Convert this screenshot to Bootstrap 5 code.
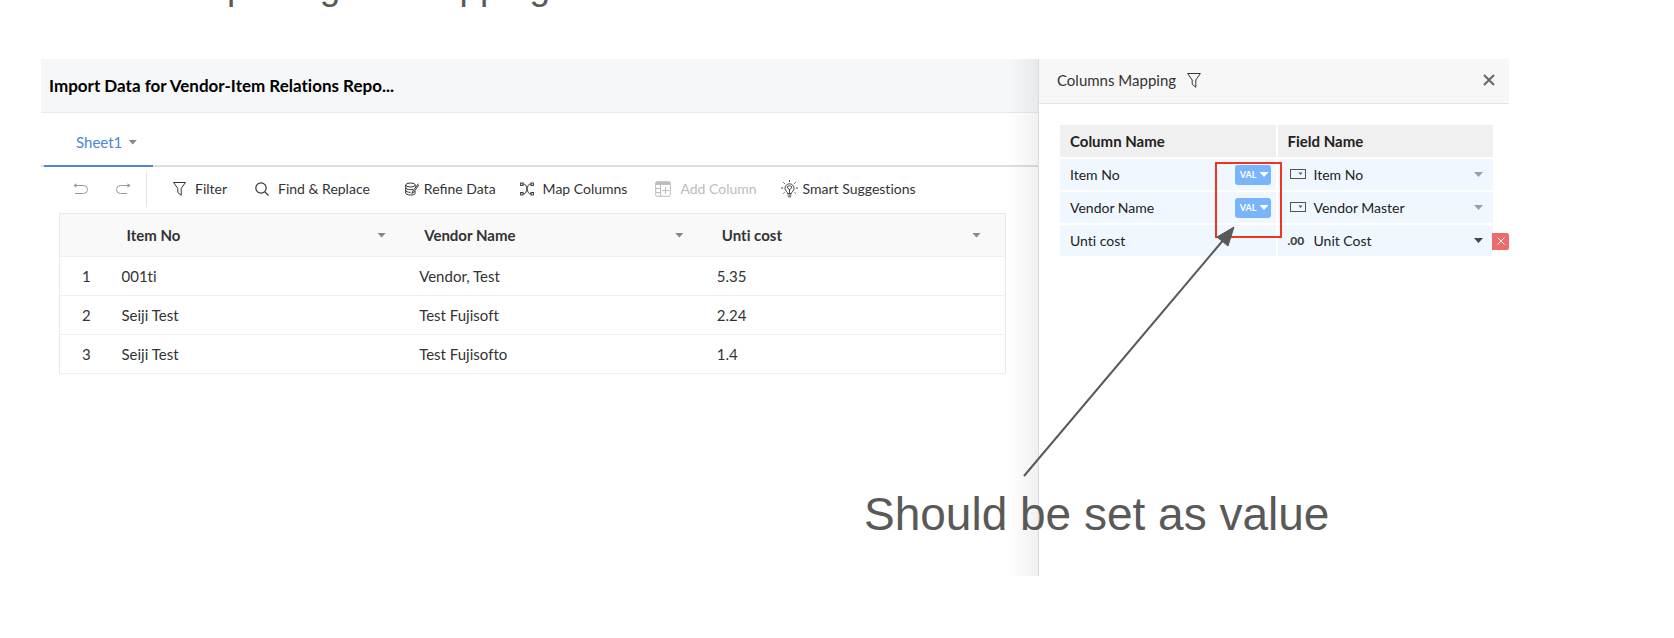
<!DOCTYPE html>
<html lang="en">
<head>
<meta charset="utf-8">
<meta name="viewport" content="width=device-width, initial-scale=1">
<title>Import Data for Vendor-Item Relations Report</title>
<link href="https://cdn.jsdelivr.net/npm/bootstrap@5.3.0/dist/css/bootstrap.min.css" rel="stylesheet">
<style>
  body { font-family: Lato, sans-serif; font-size: 14px; line-height: 20px; color: #333; background: #fff; font-variant-ligatures: none; }
  svg { display: block; flex: none; fill: none; stroke: currentColor; }
  button { font: inherit; font-variant-ligatures: none; }
  .bare { background: none; border: 0; padding: 0; color: inherit; }
  .caret { width: 9px; height: 5px; flex: none; background: #888; clip-path: polygon(0 0, 100% 0, 50% 100%); }

  .slide-title { height: 8px; padding-left: 186px; }
  .slide-title h1 { margin: 0; font: 37px/42px "Liberation Sans", sans-serif; color: #595959; white-space: nowrap; }

  .stage { margin: 51px 165px 62px 41px; min-height: 517px; }
  .workspace { min-width: 0; }
  .page-head { height: 54px; padding: 2px 0 0 8px; background: #f6f7f9; border-bottom: 1px solid #e8eaec; }
  .page-head h2 { margin: 0; font-size: 17px; font-weight: 700; color: #000; }
  .sheet-tabs { height: 54px; padding-left: 3px; border-bottom: 2px solid #dedede; }
  .sheet-tab { width: 109px; height: 54px; padding: 6px 0 0 32px; gap: 6px; color: #4a87d6; font-size: 15px; border-bottom: 2px solid #4a87d6; }
  .toolbar { height: 46px; padding: 0 0 2px 32px; }
  .history { height: 35px; padding-right: 15px; gap: 28px; color: #999; border-right: 1px solid #e4e4e4; }
  .tools { padding-left: 26px; gap: 24px; }
  .tool { gap: 9px; white-space: nowrap; }
  .tool-tight { gap: 5px; }
  .tool-group { margin-left: 11px; }
  .tool:disabled { color: #bcbcbc; }
  .with-liga { font-variant-ligatures: normal; }

  .sheet-wrap { padding: 0 32px 0 18px; }
  .sheet-grid { width: 100%; table-layout: fixed; border: 1px solid #e9e9e9; font-size: 15px; }
  .sheet-grid tr { border-bottom: 1px solid #efefef; }
  .sheet-grid th { height: 43px; padding: 0 24px 0 14px; background: #f9f9f9; font-weight: 700; }
  .sheet-grid td { height: 39px; padding: 0 9px; }
  .sheet-grid .num { width: 53px; padding: 0; text-align: center; }

  .map-panel { flex: 0 0 471px; background: #fff; border-left: 1px solid #e6e6ee; }
  .map-panel::before { content: ""; position: absolute; inset: 0 100% 0 auto; width: 30px; background: linear-gradient(to left, rgba(0,0,0,.06), rgba(0,0,0,0)); }
  .panel-head { height: 45px; padding: 0 14px 2px 18px; gap: 11px; background: #f7f7f7; border-bottom: 1px solid #e4e4e4; }
  .panel-head h3 { margin: 0; font-size: 15px; font-weight: 400; line-height: 20px; }
  .close-btn { color: #666; }
  .map-wrap { padding: 19px 14px 0 19px; }
  .map-grid { width: 100%; table-layout: fixed; border-collapse: separate; border-spacing: 2px; color: #222; }
  .map-grid th { height: 32px; padding: 0 10px; background: #f0f0f0; font-size: 15px; font-weight: 700; }
  .map-grid td { height: 31px; padding: 0 10px; background: #f0f7ff; }
  .cell { height: 20px; }
  .kind { width: 26px; color: #555; }
  .kind svg { margin: 0 0 2px 2px; }
  .kind-num { font-size: 12px; font-weight: 900; color: #444; }
  .val-btn { height: 20px; margin-right: -5px; padding: 0 2px 0 5px; gap: 3px; border: 0; border-radius: 3px; background: #78b5fb; color: #fff; font-size: 9px; font-weight: 700; }
  .val-btn .caret { background: #fff; }
  .muted-caret { background: #9aa0a6; }
  .dark-caret { background: #444; }
  .drop-map { right: -26px; top: 2px; width: 17px; height: 17px; background: #ef6b6b; color: #fff; border-radius: 0 2px 2px 0; }

  .mark-frame { left: 176px; top: 103px; width: 67px; height: 76px; border: 2px solid #ee3524; }
  .mark-arrow { left: -18px; top: 166px; stroke: #595959; }
  .mark-note { left: -175px; top: 427px; font: 46px/56px "Liberation Sans", sans-serif; color: #595959; white-space: nowrap; }
</style>
</head>
<body>
<header class="slide-title d-flex align-items-end overflow-hidden"><h1>Importing file mapping</h1></header>

<main class="stage d-flex">
  <section class="workspace flex-grow-1">
    <div class="page-head d-flex align-items-center"><h2>Import Data for Vendor-Item Relations Repo...</h2></div>
    <div class="sheet-tabs">
      <button class="sheet-tab bare d-flex align-items-center" type="button">Sheet1 <span class="caret"></span></button>
    </div>
    <div class="toolbar d-flex align-items-center">
      <div class="history d-flex align-items-center">
        <button class="bare" type="button" aria-label="Undo"><svg width="15" height="12" viewBox="0 0 15 12"><path d="M2 2.500h8.500a4 4 0 0 1 0 8H2"/><path d="M3.500 .3v4.400L.3 2.500z" fill="currentColor" stroke="none"/></svg></button>
        <button class="bare" type="button" aria-label="Redo"><svg width="15" height="12" viewBox="0 0 15 12"><path d="M13 2.500H4.500a4 4 0 0 0 0 8H11"/><path d="M11.500 .3v4.400l3.200-2.200z" fill="currentColor" stroke="none"/></svg></button>
      </div>
      <div class="tools d-flex align-items-center">
        <button class="tool bare d-flex align-items-center" type="button"><svg width="13" height="14" viewBox="0 0 13 14"><path d="M.6.5h11.800L8.200 6.500v6.800L4.800 10.500v-4z"/></svg>Filter</button>
        <button class="tool bare d-flex align-items-center ms-1" type="button"><svg width="14" height="14" viewBox="0 0 14 14" stroke-width="1.200"><circle cx="6" cy="6" r="5.200"/><path d="M9.800 9.800l3.700 3.700"/></svg>Find &amp; Replace</button>
        <button class="tool tool-tight tool-group with-liga bare d-flex align-items-center" type="button"><svg width="14" height="14" viewBox="0 0 14 14"><ellipse cx="5.500" cy="3" rx="4.800" ry="2"/><path d="M.7 3v8c0 1 2 2 4.800 2s4-.5 4.500-1.200V9M.7 5.700c0 1 2 2 4.800 2 1 0 2 0 2.600-.4M.7 8.400c0 1 2 2 4.800 2M10.300 3v1.500M13.400 1.700 8 8.800l-1.200 2.700 2.400-1.800 4.500-6.500"/></svg>Refine Data</button>
        <button class="tool bare d-flex align-items-center" type="button"><svg width="14" height="14" viewBox="0 0 14 14"><rect x=".6" y="1" width="2.400" height="2.400"/><rect x="11" y="1" width="2.400" height="2.400"/><rect x=".6" y="10.500" width="2.400" height="2.400"/><rect x="11" y="10.500" width="2.400" height="2.400"/><path d="M3 2.200h1.300c2.700 0 2.700 9.500 5.400 9.500H11M3 11.700h1.300c2.700 0 2.700-9.500 5.400-9.500H11"/></svg>Map Columns</button>
        <button class="tool bare d-flex align-items-center ms-1" type="button" disabled><svg width="16" height="16" viewBox="0 0 16 16"><rect x=".7" y=".7" width="14.600" height="14.600" rx="1.500"/><path d="M.7 2.400h14.600" stroke-width="3"/><path d="M5.500 4v11M1 7.500h4.500M1 11.500h4.500M7 9.500h7M10.500 6v7"/></svg>Add Column</button>
        <button class="tool tool-tight bare d-flex align-items-center" type="button"><svg width="17" height="18" viewBox="0 0 17 18" stroke-width=".9"><path d="M6.500 13.500c0-2-2.500-2.500-2.500-5.200a4.500 4.500 0 0 1 9 0c0 2.700-2.500 3.200-2.500 5.200zM6.500 15h4M7 16.800h3M8.500 13V9.500M6 7l2.500 3L11 7M6 7c1.500-1.500 3.500-1.500 5 0M8.500 0v2M0 8h2.200M14.800 8H17M2.300 2.300l1.500 1.400M14.700 2.300l-1.500 1.400M2.300 13.500l1.300-1.200M14.700 13.500l-1.300-1.200"/></svg>Smart Suggestions</button>
      </div>
    </div>
    <div class="sheet-wrap">
      <table class="sheet-grid">
        <thead><tr>
          <th class="num"></th>
          <th><div class="d-flex align-items-center justify-content-between">Item No <span class="caret"></span></div></th>
          <th><div class="d-flex align-items-center justify-content-between">Vendor Name <span class="caret"></span></div></th>
          <th><div class="d-flex align-items-center justify-content-between">Unti cost <span class="caret"></span></div></th>
        </tr></thead>
        <tbody>
          <tr><td class="num">1</td><td>001ti</td><td>Vendor, Test</td><td>5.35</td></tr>
          <tr><td class="num">2</td><td>Seiji Test</td><td>Test Fujisoft</td><td>2.24</td></tr>
          <tr><td class="num">3</td><td>Seiji Test</td><td>Test Fujisofto</td><td>1.4</td></tr>
        </tbody>
      </table>
    </div>
  </section>

  <aside class="map-panel position-relative">
    <div class="panel-head d-flex align-items-center">
      <h3>Columns Mapping</h3>
      <button class="bare" type="button" aria-label="Filter columns"><svg width="14" height="15" viewBox="0 0 14 15"><path d="M.6.5h12.800L8.800 7v7.300L5.200 11.200V7z"/></svg></button>
      <button class="close-btn bare ms-auto" type="button" aria-label="Close"><svg width="12" height="12" viewBox="0 0 12 12" stroke-width="2"><path d="M1 1l10 10M11 1L1 11"/></svg></button>
    </div>
    <div class="map-wrap">
      <table class="map-grid">
        <thead><tr><th>Column Name</th><th>Field Name</th></tr></thead>
        <tbody>
          <tr>
            <td><div class="cell d-flex align-items-center justify-content-between">Item No <button class="val-btn d-flex align-items-center" type="button">VAL <span class="caret"></span></button></div></td>
            <td><div class="cell d-flex align-items-center"><span class="kind"><svg width="16" height="10" viewBox="0 0 16 10"><rect x=".5" y=".5" width="15" height="9"/><path d="M8.500 3.500h4l-2 2.500z" fill="currentColor" stroke="none"/></svg></span>Item No<span class="caret muted-caret ms-auto"></span></div></td>
          </tr>
          <tr>
            <td><div class="cell d-flex align-items-center justify-content-between">Vendor Name <button class="val-btn d-flex align-items-center" type="button">VAL <span class="caret"></span></button></div></td>
            <td><div class="cell d-flex align-items-center"><span class="kind"><svg width="16" height="10" viewBox="0 0 16 10"><rect x=".5" y=".5" width="15" height="9"/><path d="M8.500 3.500h4l-2 2.500z" fill="currentColor" stroke="none"/></svg></span>Vendor Master<span class="caret muted-caret ms-auto"></span></div></td>
          </tr>
          <tr>
            <td>Unti cost</td>
            <td><div class="cell d-flex align-items-center position-relative"><span class="kind kind-num">.00</span>Unit Cost<span class="caret dark-caret ms-auto"></span>
              <button class="drop-map bare position-absolute d-flex align-items-center justify-content-center" type="button" aria-label="Remove mapping"><svg width="8" height="8" viewBox="0 0 8 8"><path d="M.5.5l7 7M7.500.5l-7 7"/></svg></button></div></td>
          </tr>
        </tbody>
      </table>
    </div>
    <div class="mark-frame position-absolute"></div>
    <svg class="mark-arrow position-absolute" width="216" height="256" viewBox="0 0 216 256"><path d="M3 251L204 13" stroke-width="2"/><path d="M213 2L196 12l11 9z" fill="#595959"/></svg>
    <p class="mark-note position-absolute m-0">Should be set as value</p>
  </aside>
</main>
<script src="https://cdn.jsdelivr.net/npm/bootstrap@5.3.0/dist/js/bootstrap.bundle.min.js"></script>
</body>
</html>
